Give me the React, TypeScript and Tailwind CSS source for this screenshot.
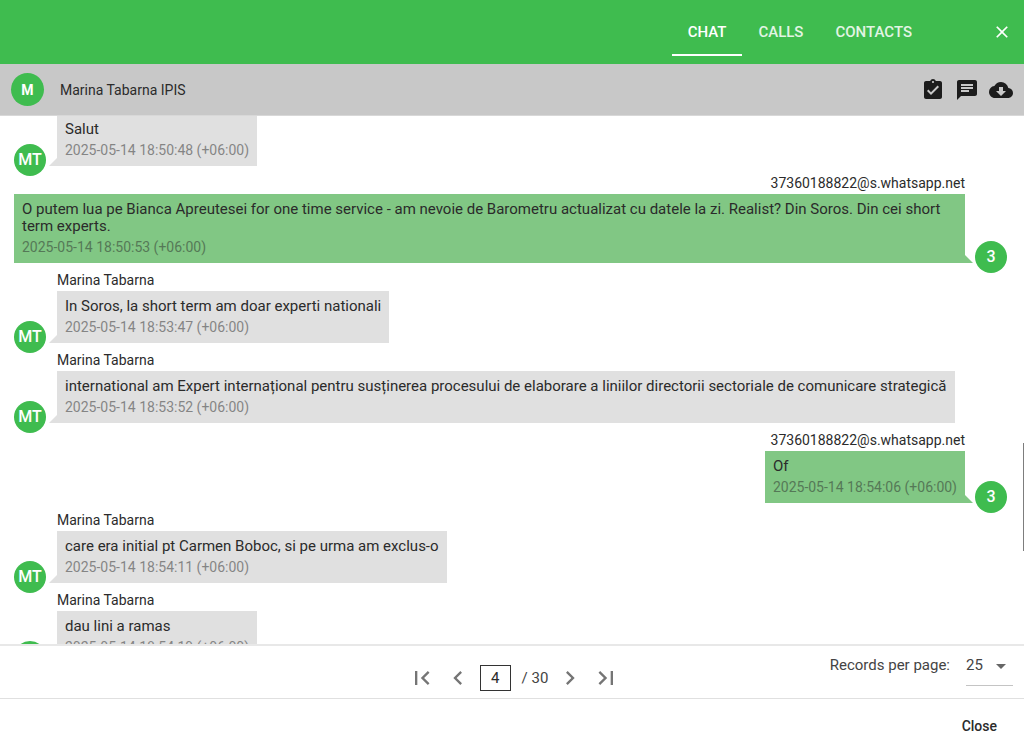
import { useLayoutEffect, useRef, useState } from "react";
import clsx from "clsx";
import {
  MdArrowDropDown,
  MdAssignmentTurnedIn,
  MdChat,
  MdChevronLeft,
  MdChevronRight,
  MdClose,
  MdCloudDownload,
  MdFirstPage,
  MdLastPage,
} from "react-icons/md";

type Message = {
  text: string;
  time: string;
  sender?: string;
  sent?: boolean;
};

const TABS = ["CHAT", "CALLS", "CONTACTS"];
const TOTAL_PAGES = 30;

const CONTACT = "Marina Tabarna";
const OWNER = "37360188822@s.whatsapp.net";

const MESSAGES: Message[] = [
  { text: "Salut", time: "2025-05-14 18:50:48 (+06:00)" },
  {
    sender: OWNER,
    text: "O putem lua pe Bianca Apreutesei for one time service - am nevoie de Barometru actualizat cu datele la zi. Realist? Din Soros. Din cei short term experts.",
    time: "2025-05-14 18:50:53 (+06:00)",
    sent: true,
  },
  {
    sender: CONTACT,
    text: "In Soros, la short term am doar experti nationali",
    time: "2025-05-14 18:53:47 (+06:00)",
  },
  {
    sender: CONTACT,
    text: "international am Expert internațional pentru susținerea procesului de elaborare a liniilor directorii sectoriale de comunicare strategică",
    time: "2025-05-14 18:53:52 (+06:00)",
  },
  { sender: OWNER, text: "Of", time: "2025-05-14 18:54:06 (+06:00)", sent: true },
  {
    sender: CONTACT,
    text: "care era initial pt Carmen Boboc, si pe urma am exclus-o",
    time: "2025-05-14 18:54:11 (+06:00)",
  },
  { sender: CONTACT, text: "dau lini a ramas", time: "2025-05-14 18:54:19 (+06:00)" },
];

function MessageRow({ text, time, sender, sent }: Message) {
  return (
    <li className={clsx("flex items-end", sent ? "flex-row-reverse gap-[10px]" : "gap-[11px]")}>
      <div className="-mb-[10px] flex size-8 shrink-0 items-center justify-center rounded-full bg-[#3fbc4f] text-base font-medium text-white">
        {sent ? "3" : "MT"}
      </div>
      <div className={clsx("flex min-w-0 flex-col", sent ? "items-end" : "items-start")}>
        {sender && (
          <div className="h-7 pt-[7px] text-sm leading-5 text-[#2b2b2b]">{sender}</div>
        )}
        <div
          className={clsx(
            "relative px-2 pt-[7px] pb-2 text-[#2b2b2b]",
            sent ? "bg-[#81c784]" : "bg-[#e0e0e0]"
          )}
        >
          <p className="text-[15px] leading-[17px]">{text}</p>
          <time className="mt-1 block text-sm leading-4 opacity-50">{time}</time>
          {/* tail */}
          <span
            className={clsx(
              "absolute bottom-0 size-0 border-t-8 border-t-transparent",
              sent
                ? "left-full border-l-8 border-l-[#81c784]"
                : "right-full border-r-8 border-r-[#e0e0e0]"
            )}
          />
        </div>
      </div>
    </li>
  );
}

export default function App() {
  const [tab, setTab] = useState("CHAT");
  const [page, setPage] = useState(4);
  const [perPage, setPerPage] = useState("25");
  const listRef = useRef<HTMLDivElement>(null);

  useLayoutEffect(() => {
    if (listRef.current) listRef.current.scrollTop = 2;
  }, []);

  const goTo = (n: number) => setPage(Math.min(TOTAL_PAGES, Math.max(1, n || 1)));

  return (
    <main className="flex h-screen flex-col bg-white font-['Roboto',sans-serif] text-[#2b2b2b]">
      <header className="flex h-16 shrink-0 items-stretch justify-end bg-[#3fbc4f] pr-3 text-white">
        <nav className="mb-2 flex" role="tablist">
          {TABS.map((t) => (
            <button
              key={t}
              role="tab"
              aria-selected={tab === t}
              onClick={() => setTab(t)}
              className={clsx(
                "border-b-2 px-4 pt-[10px] text-[15px] font-medium",
                tab === t ? "border-white" : "border-transparent opacity-85"
              )}
            >
              {t}
            </button>
          ))}
        </nav>
        <button aria-label="Close dialog" className="ml-16">
          <MdClose size={20} />
        </button>
      </header>

      <div className="flex h-[52px] shrink-0 items-center border-b border-[#d8d8d8] bg-[#c8c8c8] px-[11px]">
        <div className="flex size-[33px] items-center justify-center rounded-full bg-[#3fbc4f] text-sm font-bold text-white">
          M
        </div>
        <h1 className="ml-4 text-sm">Marina Tabarna IPIS</h1>
        <div className="ml-auto flex gap-[10px] text-[#1c1c1c]">
          <button aria-label="Select messages">
            <MdAssignmentTurnedIn size={24} />
          </button>
          <button aria-label="Comments">
            <MdChat size={24} />
          </button>
          <button aria-label="Download">
            <MdCloudDownload size={24} />
          </button>
        </div>
      </div>

      <section className="relative min-h-0 flex-1">
        <div ref={listRef} className="h-full overflow-y-auto pr-[17px] pl-[14px] [scrollbar-width:none]">
          <ul className="pb-8">
            {MESSAGES.map((m) => (
              <MessageRow key={m.time} {...m} />
            ))}
          </ul>
        </div>
        <div className="absolute top-[62%] right-0 h-[108px] w-px bg-[#7d7d7d]" />
      </section>

      <footer className="shrink-0">
        <div className="grid h-[54px] grid-cols-[1fr_auto_1fr] border-t-2 border-[#e8e8e8]">
          <div className="col-start-2 flex items-center gap-2 pt-3 pl-1 text-[#757575]">
            <button aria-label="First page" onClick={() => goTo(1)}>
              <MdFirstPage size={28} />
            </button>
            <button aria-label="Previous page" onClick={() => goTo(page - 1)}>
              <MdChevronLeft size={28} />
            </button>
            <input
              aria-label="Page"
              value={page}
              onChange={(e) => goTo(Number(e.target.value))}
              className="h-[26px] w-[31px] border border-[#333] text-center text-[15px] text-[#2b2b2b]"
            />
            <span className="ml-[3px] text-[15px] text-[#444]">/ {TOTAL_PAGES}</span>
            <button aria-label="Next page" onClick={() => goTo(page + 1)}>
              <MdChevronRight size={28} />
            </button>
            <button aria-label="Last page" onClick={() => goTo(TOTAL_PAGES)}>
              <MdLastPage size={28} />
            </button>
          </div>
          <div className="flex justify-end gap-4 pr-[11px] text-[15px] text-[#444]">
            <label htmlFor="per-page" className="pt-2">
              Records per page:
            </label>
            <div className="relative h-10 w-[47px] border-b border-[#c4c4c4]">
              <select
                id="per-page"
                value={perPage}
                onChange={(e) => setPerPage(e.target.value)}
                className="h-full w-full appearance-none bg-transparent"
              >
                <option>10</option>
                <option>25</option>
                <option>50</option>
              </select>
              <MdArrowDropDown size={24} className="pointer-events-none absolute top-2 right-0 text-[#666]" />
            </div>
          </div>
        </div>
        <div className="flex h-[43px] items-center justify-end border-t border-[#e0e0e0] pt-3 pr-[27px]">
          <button className="text-sm font-medium">Close</button>
        </div>
      </footer>
    </main>
  );
}
